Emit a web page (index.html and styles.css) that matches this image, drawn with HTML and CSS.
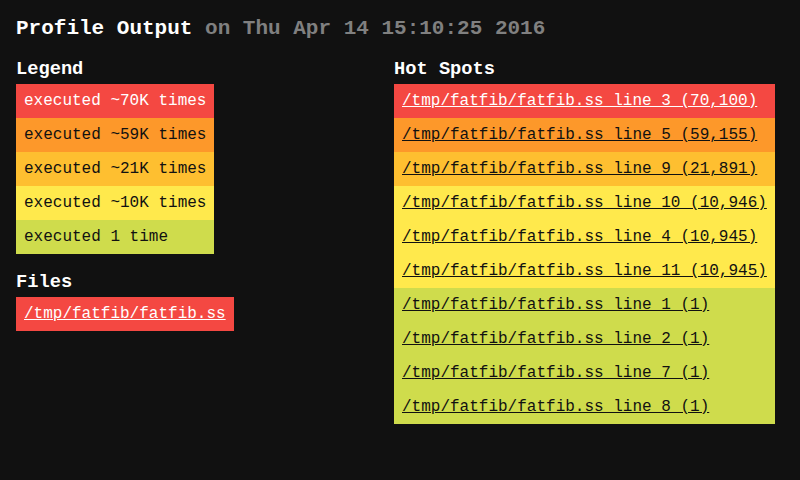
FILE: index.html
```html
<!DOCTYPE html>
<html>
<head>
<meta charset="utf-8">
<link rel="stylesheet" href="styles.css">
</head>
<body>
<h1 class="title">Profile Output <span class="date">on Thu Apr 14 15:10:25 2016</span></h1>
<div class="columns">
  <div class="col-left">
    <h3 class="heading">Legend</h3>
    <div class="list">
      <div class="row c1">executed ~70K times</div>
      <div class="row c2">executed ~59K times</div>
      <div class="row c3">executed ~21K times</div>
      <div class="row c4">executed ~10K times</div>
      <div class="row c5">executed 1 time</div>
    </div>
    <h3 class="heading files">Files</h3>
    <div class="list">
      <div class="row c1"><a href="#">/tmp/fatfib/fatfib.ss</a></div>
    </div>
  </div>
  <div class="col-right">
    <h3 class="heading">Hot Spots</h3>
    <div class="list">
      <div class="row c1"><a href="#">/tmp/fatfib/fatfib.ss line 3 (70,100)</a></div>
      <div class="row c2"><a href="#">/tmp/fatfib/fatfib.ss line 5 (59,155)</a></div>
      <div class="row c3"><a href="#">/tmp/fatfib/fatfib.ss line 9 (21,891)</a></div>
      <div class="row c4"><a href="#">/tmp/fatfib/fatfib.ss line 10 (10,946)</a></div>
      <div class="row c4"><a href="#">/tmp/fatfib/fatfib.ss line 4 (10,945)</a></div>
      <div class="row c4"><a href="#">/tmp/fatfib/fatfib.ss line 11 (10,945)</a></div>
      <div class="row c5"><a href="#">/tmp/fatfib/fatfib.ss line 1 (1)</a></div>
      <div class="row c5"><a href="#">/tmp/fatfib/fatfib.ss line 2 (1)</a></div>
      <div class="row c5"><a href="#">/tmp/fatfib/fatfib.ss line 7 (1)</a></div>
      <div class="row c5"><a href="#">/tmp/fatfib/fatfib.ss line 8 (1)</a></div>
    </div>
  </div>
</div>
</body>
</html>
```

FILE: styles.css
```css
html, body {
  background: #111111;
}
body {
  margin: 0;
  padding: 0 16px;
  font-family: "Liberation Mono", "Courier New", monospace;
  color: #ffffff;
}
.title {
  margin: 17px 0 0;
  font-size: 21px;
  line-height: 24px;
  font-weight: bold;
  color: #ffffff;
}
.date {
  color: #808080;
}
.columns {
  display: grid;
  grid-template-columns: 378px auto;
  align-items: start;
}
.col-left, .col-right {
  display: flex;
  flex-direction: column;
  align-items: flex-start;
}
.heading {
  margin: 17px 0 4px;
  font-size: 18.72px;
  line-height: 22px;
  font-weight: bold;
  color: #ffffff;
}
.list {
  display: flex;
  flex-direction: column;
  width: max-content;
}
.row {
  padding: 8px;
  font-size: 16px;
  line-height: 18px;
  color: #111111;
  white-space: pre;
}
.row a {
  color: inherit;
  text-decoration: underline;
}
.c1 { background: #f44842; color: #ffffff; }
.c2 { background: #fd982a; }
.c3 { background: #febf30; }
.c4 { background: #ffe94c; }
.c5 { background: #cfdc4c; }
```
